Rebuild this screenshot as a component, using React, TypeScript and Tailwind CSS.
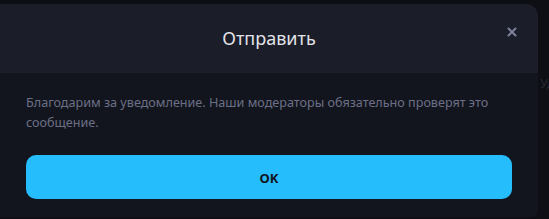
import { X } from 'lucide-react';

export default function App() {
  return (
    <div className="w-[549px] h-[219px] bg-[#0e0f14] flex overflow-hidden font-['Noto_Sans',sans-serif]">
      <div className="w-[538px] shrink-0 mt-[4px] mb-[2px] flex flex-col rounded-tr-[12px] rounded-br-[6px] overflow-hidden bg-[#13151e]">
        <div className="relative h-[69px] bg-[#1b1d29] flex items-center justify-center">
          <h2 className="text-[18px] text-[#e2e3e8] leading-none -mt-[2px]">Отправить</h2>
          <button type="button" className="absolute right-[19px] top-[21px] text-[#7b7f9a]">
            <X className="w-[14px] h-[14px]" strokeWidth={3.6} />
          </button>
        </div>
        <div className="flex-1 px-[26px] pt-[20px]">
          <p className="text-[12.6px] leading-[20px] text-[#6c7086]">
            Благодарим за уведомление. Наши модераторы обязательно проверят это сообщение.
          </p>
          <button
            type="button"
            className="mt-[22px] w-full h-[44px] pt-[4px] rounded-[10px] bg-[#26bdfc] text-[#12141c] text-[13px] font-bold"
          >
            OK
          </button>
        </div>
      </div>
      <div className="flex-1 pt-[74px] pl-[2px] text-[13px] text-[#262832] whitespace-nowrap overflow-hidden">Уд</div>
    </div>
  );
}
